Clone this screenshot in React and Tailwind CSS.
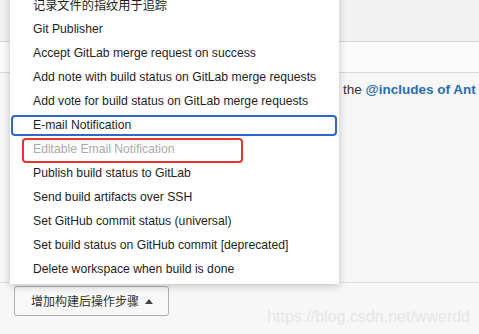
export default function App() {
  const items = [
    "记录文件的指纹用于追踪",
    "Git Publisher",
    "Accept GitLab merge request on success",
    "Add note with build status on GitLab merge requests",
    "Add vote for build status on GitLab merge requests",
    "E-mail Notification",
    "Editable Email Notification",
    "Publish build status to GitLab",
    "Send build artifacts over SSH",
    "Set GitHub commit status (universal)",
    "Set build status on GitHub commit [deprecated]",
    "Delete workspace when build is done",
  ];
  return (
    <div
      className="relative w-[479px] h-[334px] overflow-hidden bg-[#f7f7f7] text-[12px]"
      style={{ fontFamily: '"Liberation Sans", Arial, "Noto Sans CJK SC", sans-serif' }}
    >
      <div className="h-[42px] bg-[#f2f2f2] border-b border-[#d8d8d8]" />
      <div className="h-[31px] bg-[#fbfbfb] border-b border-[#d8d8d8]" />
      <div className="h-[210px] border-b border-[#dedede] pl-[343px] pt-[8px] whitespace-nowrap leading-[17px] text-[13.5px]">
        <span className="text-[#333]">the </span>
        <span className="font-bold text-[#2b6cb0]">@includes of Ant</span>
      </div>
      <div className="pl-[14px] pt-[3px]">
        <button className="h-[30px] w-[155px] flex items-center gap-[6px] pl-[16px] border border-[#a9b0b6] rounded-[3px] bg-[#f8f8f8] text-[12px] text-[#333]">
          <span style={{ fontFamily: '"Noto Sans CJK SC", sans-serif' }}>增加构建后操作步骤</span>
          <svg width="8" height="5" viewBox="0 0 8 5">
            <path d="M0 5 L4 0 L8 5 Z" fill="#444" />
          </svg>
        </button>
      </div>

      <div className="absolute left-[10px] top-[-7px] w-[329px] bg-white pb-[3px] shadow-[0_2px_8px_rgba(0,0,0,0.22)] text-[12.2px]">
        {items.map((t, i) => (
          <div
            key={i}
            className={
              "relative h-[24px] flex items-center pl-[23px] whitespace-nowrap " +
              (i === 6 ? "text-[#aaaaaa]" : "text-[#1e1e1e]")
            }
            style={i === 0 ? { fontFamily: '"Noto Sans CJK SC", sans-serif' } : undefined}
          >
            {i === 5 && (
              <div className="absolute left-[1px] right-[2px] top-[2px] bottom-[1px] border-2 border-[#2f67cc] rounded-[4px]" />
            )}
            <span className="relative">{t}</span>
          </div>
        ))}
        <div className="absolute left-[12px] top-[145px] w-[221px] h-[25px] border-2 border-[#e8342e] rounded-[4px]" />
      </div>

      <div className="absolute right-[9px] bottom-[8px] text-[16px] leading-[18px] text-[#e6e6e6] whitespace-nowrap">
        https://blog.csdn.net/wwerdd
      </div>
    </div>
  );
}
